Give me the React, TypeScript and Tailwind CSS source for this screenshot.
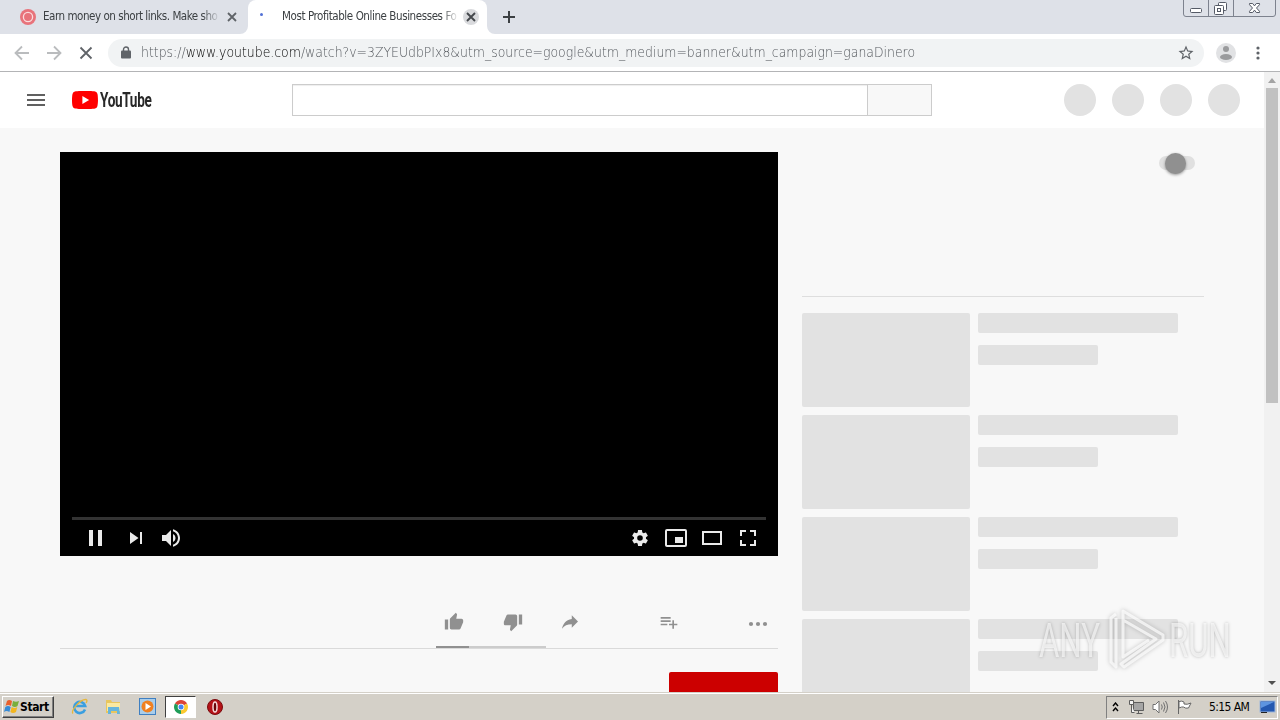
import type { ReactNode } from "react";

const tahoma = "font-['DejaVu_Sans_Condensed','DejaVu_Sans',sans-serif] [font-stretch:condensed]";

function TabStrip() {
  return (
    <div className={`flex h-[34px] items-start bg-[#dee1e8] text-[11.5px] text-[#3c4043] ${tahoma}`}>
      <div className="flex h-[34px] w-[248px] items-center pl-5">
        <svg width="16" height="16" viewBox="0 0 16 16">
          <circle cx="8" cy="8" r="8" fill="#e8737b" />
          <circle cx="8" cy="8" r="4.6" fill="#e8737b" stroke="#fbdcdd" strokeWidth="1.3" />
        </svg>
        <div className="ml-[7px] w-[177px] whitespace-nowrap tracking-[-0.46px] [mask-image:linear-gradient(to_right,black_90%,transparent)]">
          Earn money on short links. Make sho
        </div>
        <svg className="ml-[7px]" width="10" height="10" viewBox="0 0 10 10" stroke="#5f6368" strokeWidth="1.8">
          <path d="M1 1l8 8M9 1L1 9" />
        </svg>
      </div>
      <div className="relative flex h-[34px] w-[239px] items-center rounded-t-lg bg-white pl-[12px]">
        <svg className="absolute bottom-0 -left-2" width="8" height="8" fill="#fff">
          <path d="M8 0v8H0a8 8 0 0 0 8-8z" />
        </svg>
        <svg className="absolute -right-2 bottom-0" width="8" height="8" fill="#fff">
          <path d="M0 0v8h8a8 8 0 0 1-8-8z" />
        </svg>
        <div className="mb-[6px] h-[3px] w-[3px] rounded-full bg-[#5271d6]" />
        <div className="ml-[19px] w-[177px] whitespace-nowrap tracking-[-0.42px] [mask-image:linear-gradient(to_right,black_90%,transparent)]">
          Most Profitable Online Businesses Fo
        </div>
        <svg className="ml-[4px]" width="16" height="16" viewBox="0 0 16 16">
          <circle cx="8" cy="8" r="8" fill="#d9dadd" />
          <path d="M4 4l8 8M12 4l-8 8" stroke="#45484c" strokeWidth="1.9" />
        </svg>
      </div>
      <svg className="mt-[11px] ml-[16px]" width="12" height="12" stroke="#3c4043" strokeWidth="2">
        <path d="M6 0v12M0 6h12" />
      </svg>
      <svg className="mr-1 ml-auto" width="93" height="17" viewBox="0 0 93 17" fill="none" stroke="#7d828e">
        <path d="M.5 0v14q0 2.500 2.500 2.500h87q2.500 0 2.500-2.500V0M25.500 0v16M50.500 0v16" />
        <rect x="7.500" y="8.500" width="11" height="4" rx="1" fill="#fff" stroke="#555a66" />
        <rect x="35.500" y="2.500" width="8" height="8" rx="1" fill="#fff" stroke="#555a66" />
        <rect x="31.500" y="5.500" width="9" height="9" rx="1" fill="#fff" stroke="#555a66" />
        <rect x="34.500" y="8.500" width="3" height="3" stroke="#555a66" />
        <path
          d="M66.500 3.500h3.200l1.800 2.400 1.800-2.400h3.200v1.200l-3 3.300 3 3.300v1.200h-3.200l-1.800-2.400-1.800 2.400h-3.200v-1.200l3-3.300-3-3.300z"
          fill="#fff"
          stroke="#555a66"
        />
      </svg>
    </div>
  );
}

function Toolbar() {
  return (
    <div className="flex h-[38px] items-center border-b border-[#b3b4b6] bg-white pl-[14px]">
      <svg width="80" height="16" viewBox="0 0 80 16" fill="none" stroke="#babcbe" strokeWidth="1.8">
        <path d="M15 8H2M8 1.500L1.500 8 8 14.500M33 8h13M40 1.500L46.500 8 40 14.500" />
        <path d="M66.500 2.500l11 11M77.500 2.500l-11 11" stroke="#5f6368" />
      </svg>
      <div className="ml-[14px] flex h-7 w-[1096px] items-center rounded-full bg-[#f1f3f4] pl-[13px]">
        <svg width="10" height="13" viewBox="0 0 10 13">
          <path d="M2.500 6V3.500a2.500 2.500 0 0 1 5 0V6" fill="none" stroke="#5f6368" strokeWidth="1.400" />
          <rect y="4.500" width="10" height="8" rx="1" fill="#5f6368" />
        </svg>
        <div className="ml-[10px] w-[780px]">
          <div className="w-max origin-left scale-x-[0.89] font-['DejaVu_Sans',sans-serif] text-[14px] font-extralight whitespace-nowrap text-[#55595e]">
            https://<span className="text-black">www.youtube.com</span>
            /watch?v=3ZYEUdbPIx8&amp;utm_source=google&amp;utm_medium=banner&amp;utm_campaign=ganaDinero
          </div>
        </div>
        <svg className="mr-[9px] ml-auto" width="18" height="18" viewBox="0 0 24 24" fill="#5f6368">
          <path d="M22 9.240l-7.190-.62L12 2 9.190 8.630 2 9.240l5.460 4.730L5.820 21 12 17.270 18.180 21l-1.630-7.030L22 9.240zM12 15.400l-3.760 2.270 1-4.280-3.320-2.880 4.380-.38L12 6.100l1.710 4.040 4.380.38-3.320 2.880 1 4.280L12 15.400z" />
        </svg>
      </div>
      <svg className="ml-[12px]" width="20" height="20" viewBox="0 0 20 20" fill="#9a9b9d">
        <circle cx="10" cy="10" r="10" fill="#e1e2e4" />
        <circle cx="10" cy="6" r="3" />
        <ellipse cx="10" cy="14" rx="6" ry="3" />
      </svg>
      <svg className="ml-[20px]" width="4" height="14" fill="#5f6368">
        <circle cx="2" cy="2" r="1.600" />
        <circle cx="2" cy="7" r="1.600" />
        <circle cx="2" cy="12" r="1.600" />
      </svg>
    </div>
  );
}

function Masthead() {
  return (
    <header className="flex h-14 shrink-0 items-center bg-white pr-6 pl-[27px]">
      <svg width="18" height="12" fill="#606060">
        <path d="M0 0h18v2H0zM0 5h18v2H0zM0 10h18v2H0z" />
      </svg>
      <svg className="ml-[27px]" width="26" height="18" viewBox="0 0 26 18">
        <path
          d="M25.400 2.800A3.200 3.200 0 0 0 23.100.500C21.100 0 13 0 13 0S4.900 0 2.900.500A3.200 3.200 0 0 0 .600 2.800C0 4.900 0 9 0 9s0 4.100.600 6.200a3.200 3.200 0 0 0 2.300 2.300C4.900 18 13 18 13 18s8.100 0 10.100-.500a3.200 3.200 0 0 0 2.300-2.300C26 13.100 26 9 26 9s0-4.100-.600-6.200z"
          fill="#f00"
        />
        <path d="M10.400 12.900L17.100 9l-6.700-3.900z" fill="#fff" />
      </svg>
      <div className="ml-[2px] h-[24px] w-[52px]">
        <div className="w-max origin-left scale-x-[0.68] font-[Roboto,sans-serif] text-[20px] leading-[24px] font-bold tracking-[-0.5px] text-[#282828]">
          YouTube
        </div>
      </div>
      <div className="ml-[140px] flex h-8 w-[640px] border border-[#ccc] shadow-[inset_0_1px_1px_#eee]">
        <div className="flex-1" />
        <div className="w-[64px] border-l border-[#ccc] bg-[#f8f8f8]" />
      </div>
      <div className="ml-auto flex gap-4">
        {[0, 1, 2, 3].map((i) => (
          <div key={i} className="h-8 w-8 rounded-full bg-[#e2e2e2]" />
        ))}
      </div>
    </header>
  );
}

function PlayerIcon({ children }: { children: ReactNode }) {
  return (
    <svg width="36" height="36" viewBox="0 0 36 36" fill="#eaeaea" fillRule="evenodd">
      {children}
    </svg>
  );
}

function Player() {
  return (
    <div className="flex h-[404px] flex-col justify-end bg-black">
      <div className="mx-3 h-[3px] bg-[#333]" />
      <div className="flex h-9 pr-3 pl-[17px]">
        <PlayerIcon>
          <path d="M12 26h4V10h-4zM21 26h4V10h-4z" />
        </PlayerIcon>
        <div className="ml-[5px]">
          <PlayerIcon>
            <path d="M12 24l8.500-6L12 12zM22 12v12h2V12z" />
          </PlayerIcon>
        </div>
        <PlayerIcon>
          <path d="M8 21h4l5 5V10l-5 5H8zM19 14v8c1.480-.68 2.500-2.230 2.500-4s-1.020-3.260-2.500-4zM19 11.290c2.890.86 5 3.540 5 6.710s-2.110 5.850-5 6.710v2.060c4.010-.91 7-4.490 7-8.770s-2.990-7.860-7-8.770z" />
        </PlayerIcon>
        <div className="ml-auto flex">
          <PlayerIcon>
            <path d="M23.940 18.780c.03-.25.05-.51.05-.78s-.02-.52-.05-.78l1.680-1.320c.15-.12.19-.33.09-.51l-1.600-2.760c-.09-.17-.31-.24-.48-.17l-1.990.8c-.41-.32-.86-.58-1.350-.78l-.3-2.120c-.02-.19-.19-.33-.39-.33h-3.200c-.2 0-.36.14-.39.33l-.3 2.120c-.48.2-.93.47-1.350.78l-1.990-.8c-.18-.07-.39 0-.48.17l-1.600 2.760c-.1.17-.05.39.09.51l1.680 1.320c-.03.25-.05.52-.05.78s.02.52.05.78l-1.680 1.320c-.15.12-.19.33-.09.51l1.600 2.760c.09.17.31.24.48.17l1.990-.8c.41.32.86.58 1.350.78l.3 2.120c.02.19.19.33.39.33h3.200c.2 0 .36-.14.39-.33l.3-2.120c.48-.2.93-.47 1.350-.78l1.990.8c.18.07.39 0 .48-.17l1.600-2.760c.09-.17.05-.39-.09-.51zM18 20.800a2.800 2.800 0 1 1 0-5.600 2.800 2.800 0 0 1 0 5.600z" />
          </PlayerIcon>
          <PlayerIcon>
            <path d="M25 17h-8v6h8zM29 25V11a2 2 0 0 0-2-2H9a2 2 0 0 0-2 2v14c0 1.100.9 2 2 2h18a2 2 0 0 0 2-2zm-2 0H9V11h18z" />
          </PlayerIcon>
          <PlayerIcon>
            <path d="M28 11v14H8V11zM10 13v10h16V13z" />
          </PlayerIcon>
          <PlayerIcon>
            <path d="M10 16h2v-4h4v-2h-6zM20 10v2h4v4h2v-6zM24 24h-4v2h6v-6h-2zM12 20h-2v6h6v-2h-4z" />
          </PlayerIcon>
        </div>
      </div>
    </div>
  );
}

function ActionIcon({ d, className }: { d: string; className?: string }) {
  return (
    <svg className={className} width="20" height="20" viewBox="0 0 24 24" fill="#909090">
      <path d={d} />
    </svg>
  );
}

function Actions() {
  return (
    <div className="flex h-[93px] items-end border-b border-[#dadada]">
      <div className="ml-[376px] w-[110px]">
        <div className="flex pb-[14px] pl-2">
          <ActionIcon d="M1 21h4V9H1v12zm22-11c0-1.100-.9-2-2-2h-6.310l.95-4.570.03-.32c0-.41-.17-.79-.44-1.060L14.170 1 7.590 7.590C7.220 7.950 7 8.450 7 9v10c0 1.100.9 2 2 2h9c.83 0 1.540-.5 1.840-1.220l3.020-7.050c.09-.23.14-.47.14-.73v-2z" />
          <ActionIcon
            className="ml-[39px]"
            d="M15 3H6c-.83 0-1.540.5-1.840 1.220l-3.020 7.050c-.09.23-.14.47-.14.73v2c0 1.100.9 2 2 2h6.310l-.95 4.570-.03.32c0 .41.17.79.44 1.060L9.830 23l6.590-6.590c.36-.36.58-.86.58-1.410V5c0-1.100-.9-2-2-2zm4 0v12h4V3h-4z"
          />
        </div>
        <div className="flex h-[2px] bg-[#ccc]">
          <div className="w-[33px] bg-[#909090]" />
        </div>
      </div>
      <div className="flex pb-4">
        <ActionIcon
          className="ml-[16px]"
          d="M11.730 8.270V4l7.470 7.470-7.470 7.460v-4.370C6.400 14.560 2.670 16.270 0 20c1.070-5.330 4.270-10.670 11.730-11.730z"
        />
        <ActionIcon
          className="ml-[77px]"
          d="M14 10H2v2h12v-2zm0-4H2v2h12V6zm4 8v-4h-2v4h-4v2h4v4h2v-4h4v-2h-4zM2 16h8v-2H2v2z"
        />
        <svg className="ml-[69px]" width="20" height="20" fill="#909090">
          <circle cx="3" cy="12" r="2.100" />
          <circle cx="10" cy="12" r="2.100" />
          <circle cx="17" cy="12" r="2.100" />
        </svg>
      </div>
    </div>
  );
}

function Sidebar() {
  return (
    <aside className="w-[402px]">
      <div className="flex h-[145px] justify-end border-b border-[#dedede] pr-[9px]">
        <div className="mt-1 flex h-[14px] w-9 items-center rounded-full bg-[#e0e0e0] pl-[6px]">
          <div className="h-[21px] w-[21px] rounded-full bg-[#909090] shadow-[0_1px_3px_rgba(0,0,0,0.4)]" />
        </div>
      </div>
      <div className="flex flex-col gap-2 pt-4">
        {[0, 1, 2, 3].map((i) => (
          <div key={i} className="flex gap-2">
            <div className="h-[94px] w-[168px] rounded-[2px] bg-[#e2e2e2]" />
            <div className="flex flex-col gap-3">
              <div className="h-5 w-[200px] rounded-[2px] bg-[#e2e2e2]" />
              <div className="h-5 w-[120px] rounded-[2px] bg-[#e2e2e2]" />
            </div>
          </div>
        ))}
      </div>
    </aside>
  );
}

function Scrollbar() {
  return (
    <div className="flex w-4 flex-col items-center bg-[#f1f1f1]">
      <svg width="16" height="16" fill="#a3a3a3">
        <path d="M4 11l4-5 4 5z" />
      </svg>
      <div className="h-[315px] w-3 bg-[#c1c1c1]" />
      <svg className="mt-auto" width="16" height="18" fill="#505050">
        <path d="M4 7l4 4 4-4z" />
      </svg>
    </div>
  );
}

function Watermark() {
  const word =
    "w-max origin-left scale-x-[0.65] font-[Roboto,sans-serif] text-[48px] leading-[56px] font-normal text-white/65 [text-shadow:0_0_4px_rgba(0,0,0,0.25)]";
  return (
    <div className="absolute top-[606px] left-[1039px] flex h-[70px] w-[196px] items-center">
      <div className="w-[64px]">
        <div className={word}>ANY</div>
      </div>
      <svg
        className="drop-shadow-[0_0_2px_rgba(0,0,0,0.3)]"
        width="66"
        height="70"
        viewBox="0 0 66 70"
        fill="none"
        stroke="#fff"
        strokeOpacity=".7"
        strokeWidth="3"
        strokeLinejoin="round"
      >
        <path d="M20 33V5l40 24v5L21 61l-3-3 35-25-33-19M13 8l-5 4v44l5 5V12M20 33v18l26-17" />
      </svg>
      <div className="w-[64px]">
        <div className={word}>RUN</div>
      </div>
    </div>
  );
}

function Taskbar() {
  return (
    <div className={`flex h-7 items-center border-t border-[#d4d0c8] bg-[#d4d0c8] pl-[2px] text-black shadow-[inset_0_1px_0_#fff] ${tahoma}`}>
      <div className="mt-px flex h-[22px] w-[52px] items-center border border-t-white border-r-[#404040] border-b-[#404040] border-l-white pl-px shadow-[inset_-1px_-1px_0_#808080]">
        <svg width="16" height="16" viewBox="0 0 16 16">
          <path d="M3 2q2-2 5 0L7 7Q4 5 1.500 7z" fill="#e9602c" />
          <path d="M9 2q3 1.500 6 0l-1.500 5Q11 9 8 7z" fill="#79ae3c" />
          <path d="M1.300 8Q4 6 6.700 8l-1.300 5q-3-2-5.400 0z" fill="#378bd6" />
          <path d="M7.700 8q3 2 5.600 0L12 13q-3 2-5.600 0z" fill="#f3b61f" />
        </svg>
        <span className="text-[12px] font-bold tracking-[-0.4px]">Start</span>
      </div>
      <svg className="ml-[17px]" width="17" height="17" viewBox="0 0 17 17" fill="none">
        <path d="M14 11.500A5.600 5.600 0 1 1 14.200 8H5" stroke="#3b9fe0" strokeWidth="2.600" />
        <path d="M2 15.500C-.5 13 9 1 15 1.500c1.500.4 1 2 0 3.500" stroke="#e6b73c" strokeWidth="1.300" />
      </svg>
      <svg className="ml-[17px]" width="17" height="17" viewBox="0 0 17 17">
        <path d="M1 2h5l1 2h8v11H1z" fill="#e8c65e" />
        <path d="M2 5h13v8H2z" fill="#fae9a0" />
        <path d="M3 9h11l1 7h-3v-3H6v3H3z" fill="#66b5dc" />
      </svg>
      <svg className="ml-[17px]" width="17" height="17" viewBox="0 0 17 17">
        <rect x=".5" y=".5" width="16" height="16" fill="#a9cdea" stroke="#3f7fc1" />
        <circle cx="8.500" cy="8.500" r="6" fill="#f08020" />
        <path d="M6.500 5v7l5.500-3.500z" fill="#fff" />
      </svg>
      <div className="ml-[9px] flex h-[22px] w-[31px] items-center justify-center border border-t-[#404040] border-r-white border-b-white border-l-[#404040] bg-white">
        <svg width="14" height="14" viewBox="0 0 14 14">
          <path d="M7 7L.940 3.500A7 7 0 0 1 13.060 3.500z" fill="#dc4437" />
          <path d="M7 7L13.060 3.500A7 7 0 0 1 7 14z" fill="#fbc92f" />
          <path d="M7 7v7A7 7 0 0 1 .940 3.500z" fill="#1f9d58" />
          <circle cx="7" cy="7" r="3.300" fill="#fff" />
          <circle cx="7" cy="7" r="2.500" fill="#4485f4" />
        </svg>
      </div>
      <svg className="ml-[11px]" width="16" height="16" viewBox="0 0 16 16">
        <circle cx="8" cy="8" r="7.500" fill="#b51218" stroke="#7a0b0e" />
        <ellipse cx="8" cy="8" rx="2" ry="5" fill="#6a0508" stroke="#f5dada" strokeWidth="1.500" />
      </svg>
      <div className="mt-px mr-[2px] ml-auto flex h-[23px] w-[172px] items-center border border-t-[#808080] border-r-white border-b-white border-l-[#808080] pl-[5px]">
        <svg width="7" height="10" fill="none" stroke="#000" strokeWidth="1.400">
          <path d="M1 4l2.500-3L6 4M1 9l2.500-3L6 9" />
        </svg>
        <svg className="ml-[9px]" width="17" height="16" viewBox="0 0 17 16" stroke="#5d5d5d">
          <path d="M5.500 3.500h10v8h-10z" fill="#a5a5a5" />
          <path d="M1.500 1.500h4v4h-4zM3.500 5.500v8h3M8.500 14.500h6M10.500 11.500v3" fill="#f4f4f4" />
        </svg>
        <svg className="ml-[7px]" width="17" height="16" viewBox="0 0 17 16" fill="none" stroke="#707070">
          <path d="M1 5.500h2.500L7 2v12l-3.500-3.500H1z" fill="#fff" />
          <path d="M9.500 5.500q1.500 2.500 0 5M11.500 3.500q3 4.500 0 9M13.500 2q4 6 0 12" />
        </svg>
        <svg className="ml-[7px]" width="17" height="16" viewBox="0 0 17 16" stroke="#666">
          <path d="M2.500 1v14M3 2.500q3-1 5 .500v2q3 1 7-1l-2.500 5q-3 .8-5-1Q6 7.500 3 9z" fill="#fff" />
        </svg>
        <span className="ml-[16px] w-[42px] text-[12px] whitespace-nowrap tracking-[-0.6px]">5:15 AM</span>
        <svg className="ml-[8px]" width="17" height="14" viewBox="0 0 17 14">
          <rect x="1" y="1" width="15" height="11" fill="#2458b0" stroke="#9db7dc" />
          <path d="M2 2h13L2 8z" fill="#5d94e0" />
          <path d="M2 12.500h6" stroke="#222" />
        </svg>
      </div>
    </div>
  );
}

export default function App() {
  return (
    <div className="relative flex h-[720px] w-[1280px] flex-col overflow-hidden bg-white">
      <TabStrip />
      <Toolbar />
      <div className="flex h-[620px] overflow-hidden">
        <div className="flex min-w-0 flex-1 flex-col bg-[#f8f8f8]">
          <Masthead />
          <main className="flex min-h-0 flex-1 gap-6 overflow-hidden pt-6 pl-[60px]">
            <div className="w-[718px]">
              <Player />
              <Actions />
              <div className="mt-[23px] ml-auto h-9 w-[109px] rounded-[2px] bg-[#c00]" />
            </div>
            <Sidebar />
          </main>
        </div>
        <Scrollbar />
      </div>
      <Taskbar />
      <Watermark />
    </div>
  );
}
